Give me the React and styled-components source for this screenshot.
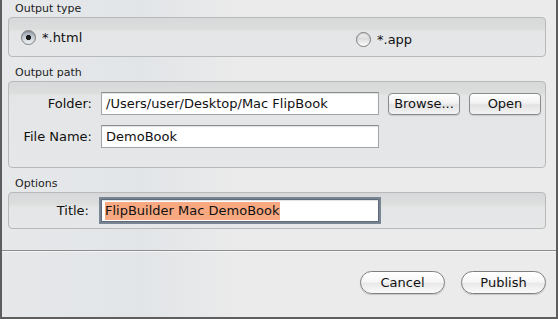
import React from "react";
import styled, { createGlobalStyle } from "styled-components";

const Global = createGlobalStyle`
  html, body { margin: 0; padding: 0; background: #ebebeb; }
  * { box-sizing: border-box; }
`;

const Window = styled.div`
  width: 558px;
  height: 319px;
  background: linear-gradient(90deg, #e6e8ea 0px, #e2e5e8 140px, #ebebeb 240px, #ebebeb 100%);
  border-left: 2px solid #5e5e5e;
  border-right: 2px solid #5e5e5e;
  border-bottom: 2px solid #5e5e5e;
  display: flex;
  flex-direction: column;
  font-family: "DejaVu Sans", "Liberation Sans", sans-serif;
  color: #111;
`;

const Body = styled.div`
  padding: 1px 10px 0 6px;
  display: flex;
  flex-direction: column;
  gap: 8px;
`;

const Section = styled.section`
  display: flex;
  flex-direction: column;
`;

const Legend = styled.div`
  height: 16px;
  line-height: 16px;
  padding-left: 7px;
  font-size: 11px;
  color: #222;
`;

const GroupBox = styled.div`
  border: 1px solid #b9b9b9;
  border-radius: 4px;
  background: linear-gradient(180deg, #d7d8d9 0px, #dcdddd 11px, #e4e5e6 14px, #e6e7e8 100%);
  padding: ${(p) => p.$pad};
`;

const RadioRow = styled.div`
  display: grid;
  grid-template-columns: 335px 1fr;
  align-items: center;
  height: 38px;
  padding-left: 12px;
`;

const RadioItem = styled.label`
  display: flex;
  align-items: center;
  gap: 6px;
  font-size: 13px;
  margin-top: ${(p) => (p.$low ? "4px" : "0")};
`;

const RadioCircle = styled.span`
  width: 15px;
  height: 15px;
  border-radius: 50%;
  border: 1px solid #7d7d7d;
  background: ${(p) =>
    p.$on
      ? "radial-gradient(circle at 50% 50%, #1c1c1c 0 2.4px, transparent 2.9px), linear-gradient(180deg, #9aa3ad 0%, #cfd6dd 60%, #eef1f4 100%)"
      : "linear-gradient(180deg, #f4f4f4 0%, #dcdcdc 45%, #ffffff 100%)"};
  box-shadow: inset 0 1px 1px rgba(0, 0, 0, 0.15);
`;

const FormGrid = styled.div`
  display: grid;
  grid-template-columns: 83px 278px 72px 72px;
  column-gap: 9px;
  row-gap: 10px;
  align-items: center;
`;

const FieldLabel = styled.span`
  text-align: right;
  font-size: 13px;
  padding-right: ${(p) => p.$shift || "0px"};
`;

const TextBox = styled.div`
  height: 23px;
  background: #fff;
  border: 1px solid #a4a4a4;
  border-top-color: #8c8c8c;
  box-shadow: inset 0 1px 1px rgba(0, 0, 0, 0.12);
  font-size: 13px;
  line-height: 21px;
  padding-left: 4px;
  white-space: nowrap;
  overflow: hidden;
  ${(p) =>
    p.$focus &&
    `
    box-shadow: 0 0 0 2px #7a8593, inset 0 1px 1px rgba(0,0,0,0.12);
    border-color: #5f6a78;
    padding-left: 3px;
  `}
`;

const Selection = styled.span`
  background: #f8a981;
  display: inline-block;
  line-height: 18px;
  padding: 0 0 0 0;
`;

const PushButton = styled.button`
  height: 22px;
  width: 72px;
  padding: 0;
  border: 1px solid #8a8a8a;
  border-radius: 4px;
  background: linear-gradient(180deg, #ffffff 0%, #f2f2f2 45%, #e2e2e2 55%, #f3f3f3 100%);
  font-family: inherit;
  font-size: 13px;
  color: #111;
  box-shadow: 0 1px 1px rgba(0, 0, 0, 0.12);
`;

const Spacer = styled.span``;

const Separator = styled.div`
  margin-top: 21px;
  height: 2px;
  border-top: 1px solid #8c8c8c;
  border-bottom: 1px solid #f6f6f6;
`;

const Footer = styled.div`
  display: flex;
  justify-content: flex-end;
  gap: 16px;
  padding: 19px 10px 0 0;
`;

const PillButton = styled.button`
  width: 85px;
  height: 23px;
  padding: 0;
  border: 1px solid #7f7f7f;
  border-radius: 12px;
  background: linear-gradient(180deg, #ffffff 0%, #f7f7f7 45%, #e9e9e9 55%, #fbfbfb 100%);
  font-family: inherit;
  font-size: 13px;
  color: #111;
  box-shadow: 0 1px 1px rgba(0, 0, 0, 0.15);
`;

export default function App() {
  return (
    <>
      <Global />
      <Window>
        <Body>
          <Section>
            <Legend>Output type</Legend>
            <GroupBox $pad="0">
              <RadioRow>
                <RadioItem>
                  <RadioCircle $on />
                  *.html
                </RadioItem>
                <RadioItem $low>
                  <RadioCircle />
                  *.app
                </RadioItem>
              </RadioRow>
            </GroupBox>
          </Section>
          <Section>
            <Legend>Output path</Legend>
            <GroupBox $pad="10px 0 19px 0">
              <FormGrid>
                <FieldLabel>Folder:</FieldLabel>
                <TextBox>/Users/user/Desktop/Mac FlipBook</TextBox>
                <PushButton>Browse...</PushButton>
                <PushButton>Open</PushButton>
                <FieldLabel>File Name:</FieldLabel>
                <TextBox>DemoBook</TextBox>
                <Spacer />
                <Spacer />
              </FormGrid>
            </GroupBox>
          </Section>
          <Section>
            <Legend>Options</Legend>
            <GroupBox $pad="6px 0 6px 0">
              <FormGrid>
                <FieldLabel $shift="3px">Title:</FieldLabel>
                <TextBox $focus>
                  <Selection>FlipBuilder Mac DemoBook</Selection>
                </TextBox>
              </FormGrid>
            </GroupBox>
          </Section>
        </Body>
        <Separator />
        <Footer>
          <PillButton>Cancel</PillButton>
          <PillButton>Publish</PillButton>
        </Footer>
      </Window>
    </>
  );
}
